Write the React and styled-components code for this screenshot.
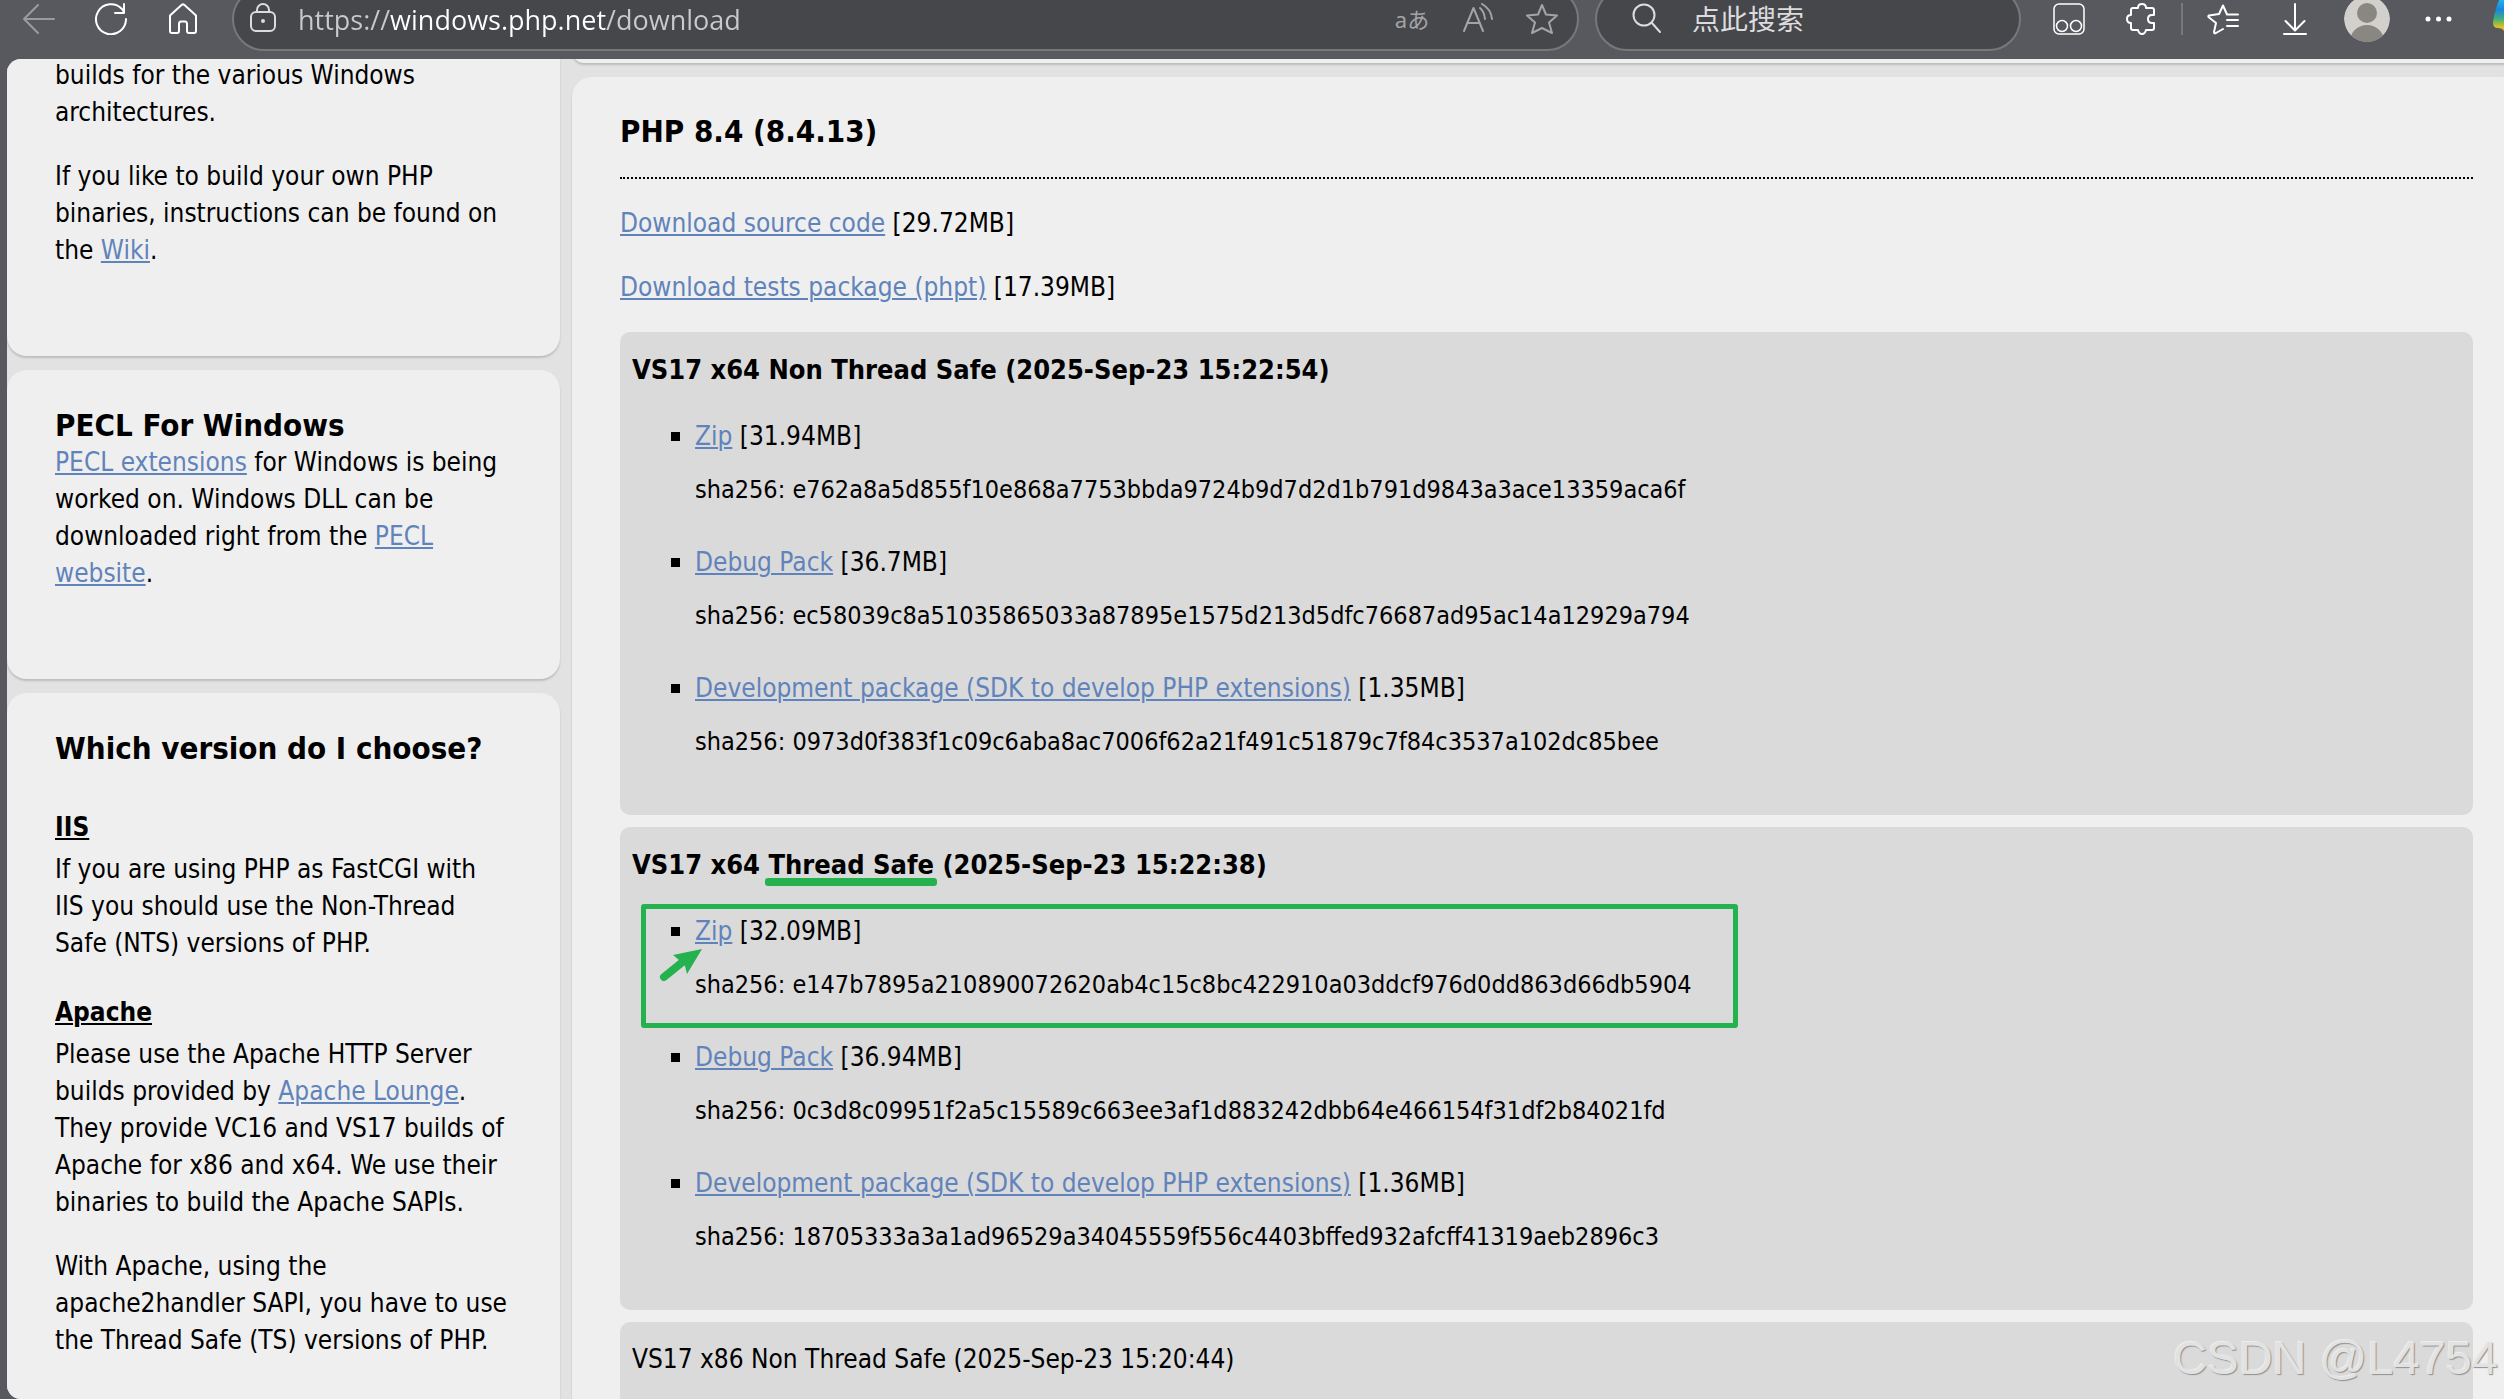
import React from "react";
import styled, { createGlobalStyle } from "styled-components";

const GlobalStyle = createGlobalStyle`
  * {
    box-sizing: border-box;
  }

  body {
    margin: 0;
    background: #58595e;
    color: #000;
    font-family: "DejaVu Sans Condensed", "DejaVu Sans", Tahoma, sans-serif;
    font-size: 26px;
    line-height: 37px;
    overflow: hidden;
  }

  h2, h3, h4, p, ul {
    margin: 0;
    padding: 0;
  }
`;

const Window = styled.div`
  position: relative;
  display: flex;
  flex-direction: column;
  height: 100vh;
  overflow: hidden;
`;

/* ---------- toolbar ---------- */

const Toolbar = styled.header`
  flex: none;
  display: flex;
  align-items: center;
  height: 64px;
  margin-top: -13px;
  margin-bottom: 8px;
  padding-left: 23px;
`;

const Group = styled.div`
  flex: none;
  display: flex;
  align-items: center;
  gap: ${(props) => props.$gap || 40}px;
  margin: ${(props) => props.$margin || 0};
`;

const IconButton = styled.button`
  flex: none;
  display: flex;
  align-items: center;
  justify-content: center;
  width: ${(props) => props.$width || 32}px;
  height: 32px;
  padding: 0;
  border: 0;
  background: none;
  color: ${(props) => props.$color || "#fff"};

  svg {
    flex: none;
    display: block;
    fill: none;
    stroke: currentColor;
    stroke-width: 2;
    stroke-linecap: round;
    stroke-linejoin: round;
  }
`;

const Bar = styled.form`
  display: flex;
  align-items: center;
  height: 64px;
  border: 2px solid #77787c;
  border-radius: 32px;
  background: #46474b;
`;

const AddressBar = styled(Bar)`
  flex: 1;
  min-width: 0;
  margin-left: 33px;
  padding: 0 19px 0 14px;
`;

const SearchBar = styled(Bar)`
  flex: none;
  width: 426px;
  margin: 0 32px 0 16px;
  padding: 0 24px 0 34px;
`;

const Field = styled.input`
  flex: 1;
  min-width: 0;
  height: 40px;
  padding: 0;
  border: 0;
  outline: 0;
  background: none;
  color: #dcdcde;
  font-family: "Open Sans", "Noto Sans CJK SC", sans-serif;
  font-size: 27px;
`;

/* the host name is brighter than the rest of the address */
const AddressField = styled(Field)`
  margin-left: 18px;
  background: linear-gradient(
    to right,
    #c9cacc 92px,
    #fff 92px,
    #fff 308px,
    #c9cacc 308px
  );
  background-clip: text;
  -webkit-background-clip: text;
  -webkit-text-fill-color: transparent;
`;

const SearchField = styled(Field)`
  margin-left: 29px;
  font-size: 28px;

  &::placeholder {
    color: #dcdcde;
    opacity: 1;
  }
`;

const Translate = styled.span`
  font-family: "Noto Sans", "Noto Sans CJK JP", sans-serif;
  font-size: 22px;
  line-height: 32px;
`;

const Divider = styled.span`
  width: 2px;
  height: 32px;
  background: #77787c;
`;

const Avatar = styled(IconButton)`
  width: 46px;
  height: 46px;
  border-radius: 50%;
  overflow: hidden;

  svg {
    stroke: none;
  }
`;

const Copilot = styled(IconButton)`
  justify-content: flex-start;
  width: 11px;

  svg {
    stroke: none;
  }
`;

/* ---------- page ---------- */

const Page = styled.div`
  flex: 1;
  min-height: 0;
  display: flex;
  gap: 12px;
  margin-left: 7px;
  border-radius: 14px 0 0 14px;
  background: #e2e2e2;
  overflow: hidden;
`;

const Sidebar = styled.aside`
  flex: none;
  display: flex;
  flex-direction: column;
  gap: 14px;
  width: 553px;
`;

const Main = styled.main`
  flex: 1;
  min-width: 0;
  display: flex;
  flex-direction: column;
  gap: 14px;
  margin-right: -17px;
`;

const Card = styled.section`
  flex: none;
  padding: 37px 48px 87px;
  border-radius: 20px;
  background: #efefef;
  box-shadow: 0 2px 2px #bdbdbd;
`;

/* the cards that are scrolled half out of view */
const TopCard = styled(Card)`
  margin-top: -20px;
  padding-top: 18px;
`;

const EndCard = styled(Card)`
  height: 24px;
  margin-top: -20px;
  padding: 0;
`;

const MainCard = styled(Card)`
  padding-bottom: 48px;
`;

const Title = styled.h2`
  font-size: 31px;
  line-height: 37px;
`;

const VersionTitle = styled(Title)`
  padding-bottom: 28px;
  margin-bottom: 26px;
  border-bottom: 2px dotted #000;
  line-height: 35px;
`;

const SubTitle = styled.h3`
  margin-top: ${(props) => props.$top}px;
  margin-bottom: 5px;
  font-size: 26px;
  line-height: 37px;
  text-decoration: underline;
  text-decoration-thickness: 2px;
  text-underline-offset: 2px;
`;

const Text = styled.p`
  & + & {
    margin-top: 27px;
  }
`;

const Link = styled.a`
  color: #6183bb;
  text-decoration: underline;
  text-decoration-thickness: 2px;
  text-underline-offset: 2px;
`;

const Build = styled.div`
  margin-top: ${(props) => (props.$first ? 26 : 12)}px;
  padding: 19px 12px 55px;
  border-radius: 10px;
  background: #dadada;
`;

const BuildTitle = styled.h4`
  font-size: ${(props) => (props.$plain ? 26 : 27)}px;
  font-weight: ${(props) => (props.$plain ? 400 : 700)};
  line-height: 37px;
`;

const Files = styled.ul`
  display: flex;
  flex-direction: column;
  gap: 36px;
  margin-top: 30px;
  padding-left: 39px;
  list-style: none;
`;

const File = styled.li`
  position: relative;
  display: grid;
  grid-template-columns: 9px 1fr;
  column-gap: 15px;
  row-gap: 16px;
`;

const Bullet = styled.span`
  width: 9px;
  height: 9px;
  margin-top: 14px;
  background: #000;
`;

const Hash = styled.p`
  grid-column: 2;
  font-size: 25px;
`;

/* ---------- marks drawn over the page ---------- */

const Marked = styled.span`
  position: relative;

  &::after {
    content: "";
    position: absolute;
    left: -3px;
    right: -3px;
    bottom: -6px;
    height: 8px;
    border-radius: 3px;
    background: #24b24e;
  }
`;

const Frame = styled.span`
  position: absolute;
  top: -9px;
  left: -30px;
  width: 1097px;
  height: 124px;
  border: 5px solid #24b24e;
  border-radius: 3px;
`;

const Arrow = styled.svg`
  position: absolute;
  top: 33px;
  left: -15px;
  fill: #24b24e;
  stroke: #24b24e;
`;

const Watermark = styled.div`
  position: absolute;
  right: 6px;
  bottom: 14px;
  color: #e2e2e2;
  font-family: "Liberation Sans", Arial, sans-serif;
  font-size: 47px;
  line-height: 54px;
  text-shadow: 1px 1px 1px #8f8f8f, -1px -1px 0 #eeeeee;
  pointer-events: none;
`;

const nonThreadSafe = [
  {
    name: "Zip",
    size: "31.94MB",
    hash: "e762a8a5d855f10e868a7753bbda9724b9d7d2d1b791d9843a3ace13359aca6f",
  },
  {
    name: "Debug Pack",
    size: "36.7MB",
    hash: "ec58039c8a51035865033a87895e1575d213d5dfc76687ad95ac14a12929a794",
  },
  {
    name: "Development package (SDK to develop PHP extensions)",
    size: "1.35MB",
    hash: "0973d0f383f1c09c6aba8ac7006f62a21f491c51879c7f84c3537a102dc85bee",
  },
];

const threadSafe = [
  {
    name: "Zip",
    size: "32.09MB",
    hash: "e147b7895a210890072620ab4c15c8bc422910a03ddcf976d0dd863d66db5904",
    marked: true,
  },
  {
    name: "Debug Pack",
    size: "36.94MB",
    hash: "0c3d8c09951f2a5c15589c663ee3af1d883242dbb64e466154f31df2b84021fd",
  },
  {
    name: "Development package (SDK to develop PHP extensions)",
    size: "1.36MB",
    hash: "18705333a3a1ad96529a34045559f556c4403bffed932afcff41319aeb2896c3",
  },
];

function FileList({ files }) {
  return (
    <Files>
      {files.map((file) => (
        <File key={file.hash}>
          <Bullet />
          <p>
            <Link href="#">{file.name}</Link> [{file.size}]
          </p>
          <Hash>sha256: {file.hash}</Hash>
          {file.marked && (
            <>
              <Frame />
              <Arrow width="48" height="36" viewBox="0 0 48 36">
                <path d="M8 31L29 14" strokeWidth="8" strokeLinecap="round" />
                <path d="M46 3L17 9L23 14L29 20L31 28Z" stroke="none" />
              </Arrow>
            </>
          )}
        </File>
      ))}
    </Files>
  );
}

function BrowserToolbar() {
  return (
    <Toolbar>
      <Group>
        <IconButton $color="#9a9b9e" aria-label="Back">
          <svg width="32" height="32" viewBox="0 0 32 32">
            <path d="M31 16H1M15 2L1 16L15 30" />
          </svg>
        </IconButton>
        <IconButton aria-label="Refresh">
          <svg width="32" height="32" viewBox="0 0 32 32">
            <path d="M31 16A15 15 0 1 1 27 6L29 9M29 1V10H20" />
          </svg>
        </IconButton>
        <IconButton aria-label="Home">
          <svg width="32" height="32" viewBox="0 0 32 32">
            <path d="M3 12.500L14.500 2Q16 .8 17.500 2L29 12.500V28Q29 30 27 30H22Q20 30 20 28V21Q20 18.500 18 18.500H14Q12 18.500 12 21V28Q12 30 10 30H5Q3 30 3 28Z" />
          </svg>
        </IconButton>
      </Group>

      <AddressBar>
        <IconButton type="button" $color="#dcdcde" aria-label="Site information">
          <svg width="32" height="32" viewBox="0 0 32 32">
            <rect x="3" y="9" width="24" height="19" rx="5" />
            <path d="M9 9V7A6 6 0 0 1 21 7V9" />
            <circle cx="15" cy="18" r="1" fill="currentColor" />
          </svg>
        </IconButton>
        <AddressField aria-label="Address" defaultValue="https://windows.php.net/download" />
        <Group $gap={32}>
          <IconButton type="button" $color="#a3a4a7" $width={36} aria-label="Translate">
            <Translate>aあ</Translate>
          </IconButton>
          <IconButton type="button" $color="#a3a4a7" aria-label="Read aloud">
            <svg width="32" height="32" viewBox="0 0 32 32">
              <path d="M2 28L11.500 5L21 28M5 20H18M18 5Q22 8 23 16M20 1Q29 6 30 16" />
            </svg>
          </IconButton>
          <IconButton type="button" $color="#a3a4a7" aria-label="Add to favorites">
            <svg width="32" height="32" viewBox="0 0 32 32">
              <path d="M16 2L20 11.500L31 12.500L23 19.500L26 30L16 25L6 30L9 19.500L1 12.500L12 11.500Z" />
            </svg>
          </IconButton>
        </Group>
      </AddressBar>

      <SearchBar>
        <IconButton type="button" $color="#dcdcde" aria-label="Search">
          <svg width="32" height="32" viewBox="0 0 32 32">
            <circle cx="13" cy="12" r="10.500" />
            <path d="M20.500 19.500L29 29" />
          </svg>
        </IconButton>
        <SearchField aria-label="Search" placeholder="点此搜索" />
      </SearchBar>

      <Group>
        <IconButton aria-label="Tampermonkey">
          <svg width="32" height="32" viewBox="0 0 32 32">
            <g strokeWidth="1.5">
              <rect x="1" y="1" width="30" height="30" rx="5" />
              <circle cx="9" cy="23" r="5.500" />
              <circle cx="23" cy="23" r="5.500" />
            </g>
          </svg>
        </IconButton>
        <IconButton aria-label="Extensions">
          <svg width="32" height="32" viewBox="0 0 32 32">
            <path d="M6 7Q6 5 8 5H13Q13 1 17 1Q21 1 21 5H27Q29 5 29 7V12H27Q23 12 23 16Q23 20 27 20H29V25Q29 27 27 27H21Q20 31 17 31Q14 31 13 27H8Q6 27 6 25V20Q2 20 2 16Q2 12 6 12Z" />
          </svg>
        </IconButton>
      </Group>
      <Group $gap={24} $margin="0 40px 0 24px">
        <Divider />
        <IconButton aria-label="Favorites">
          <svg width="32" height="32" viewBox="0 0 32 32">
            <path d="M31 11.500H20L16 2.500L12 11L2 12.500Q1 13 1.500 14L9 20L7 29Q7 31 9 30L16 26M20 17H31M20 23H31" />
          </svg>
        </IconButton>
      </Group>
      <IconButton aria-label="Downloads">
        <svg width="32" height="32" viewBox="0 0 32 32">
          <path d="M16 1V27M6.500 18L16 27.500L25.500 18M5 31H27" />
        </svg>
      </IconButton>
      <Group $gap={32} $margin="0 39px 0 33px">
        <Avatar aria-label="Profile">
          <svg width="46" height="46" viewBox="0 0 46 46">
            <circle cx="23" cy="23" r="23" fill="#d2d0cd" />
            <circle cx="23" cy="17" r="10" fill="#8a8681" />
            <ellipse cx="23" cy="45" rx="17" ry="16" fill="#8a8681" />
          </svg>
        </Avatar>
        <IconButton aria-label="Settings and more">
          <svg width="32" height="32" viewBox="0 0 32 32">
            <g fill="currentColor" stroke="none">
              <circle cx="6" cy="16" r="2.500" />
              <circle cx="16.500" cy="16" r="2.500" />
              <circle cx="27" cy="16" r="2.500" />
            </g>
          </svg>
        </IconButton>
      </Group>
      <Copilot aria-label="Copilot">
        <svg width="44" height="44" viewBox="0 0 44 44">
          <defs>
            <linearGradient id="copilot" x1="0" y1="0" x2="0" y2="1">
              <stop offset="0" stopColor="#1fc0f5" />
              <stop offset=".35" stopColor="#1a86dd" />
              <stop offset=".6" stopColor="#3fae7c" />
              <stop offset=".85" stopColor="#e8c21d" />
              <stop offset="1" stopColor="#fb9a3c" />
            </linearGradient>
          </defs>
          <path
            d="M8 0Q5 4 3 12Q0 22 0 26Q0 31 5 31Q9 31 10 33L14 36V0Z"
            fill="url(#copilot)"
          />
        </svg>
      </Copilot>
    </Toolbar>
  );
}

class App extends React.Component {
  render() {
    return (
      <Window>
        <GlobalStyle />
        <BrowserToolbar />
        <Page>
          <Sidebar>
            <TopCard>
              <Text>builds for the various Windows architectures.</Text>
              <Text>
                If you like to build your own PHP binaries, instructions can be
                found on the <Link href="#">Wiki</Link>.
              </Text>
            </TopCard>
            <Card>
              <Title>PECL For Windows</Title>
              <Text>
                <Link href="#">PECL extensions</Link> for Windows is being
                worked on. Windows DLL can be downloaded right from
                the <Link href="#">PECL website</Link>.
              </Text>
            </Card>
            <Card>
              <Title>Which version do I choose?</Title>
              <SubTitle $top={42}>IIS</SubTitle>
              <Text>
                If you are using PHP as FastCGI with
                <br />
                IIS you should use the Non-Thread Safe (NTS) versions of PHP.
              </Text>
              <SubTitle $top={32}>Apache</SubTitle>
              <Text>
                Please use the Apache HTTP Server builds provided
                by <Link href="#">Apache Lounge</Link>. They provide VC16 and
                VS17 builds of Apache for x86 and x64. We use their binaries to
                build the Apache SAPIs.
              </Text>
              <Text>
                With Apache, using the apache2handler SAPI, you have to use the
                Thread Safe (TS) versions of PHP.
              </Text>
            </Card>
          </Sidebar>
          <Main>
            <EndCard />
            <MainCard>
              <VersionTitle>PHP 8.4 (8.4.13)</VersionTitle>
              <Text>
                <Link href="#">Download source code</Link> [29.72MB]
              </Text>
              <Text>
                <Link href="#">Download tests package (phpt)</Link> [17.39MB]
              </Text>
              <Build $first>
                <BuildTitle>VS17 x64 Non Thread Safe (2025-Sep-23 15:22:54)</BuildTitle>
                <FileList files={nonThreadSafe} />
              </Build>
              <Build>
                <BuildTitle>
                  VS17 x64 <Marked>Thread Safe</Marked> (2025-Sep-23 15:22:38)
                </BuildTitle>
                <FileList files={threadSafe} />
              </Build>
              <Build>
                <BuildTitle $plain>VS17 x86 Non Thread Safe (2025-Sep-23 15:20:44)</BuildTitle>
              </Build>
            </MainCard>
          </Main>
        </Page>
        <Watermark>CSDN @L4754</Watermark>
      </Window>
    );
  }
}

export default App;
